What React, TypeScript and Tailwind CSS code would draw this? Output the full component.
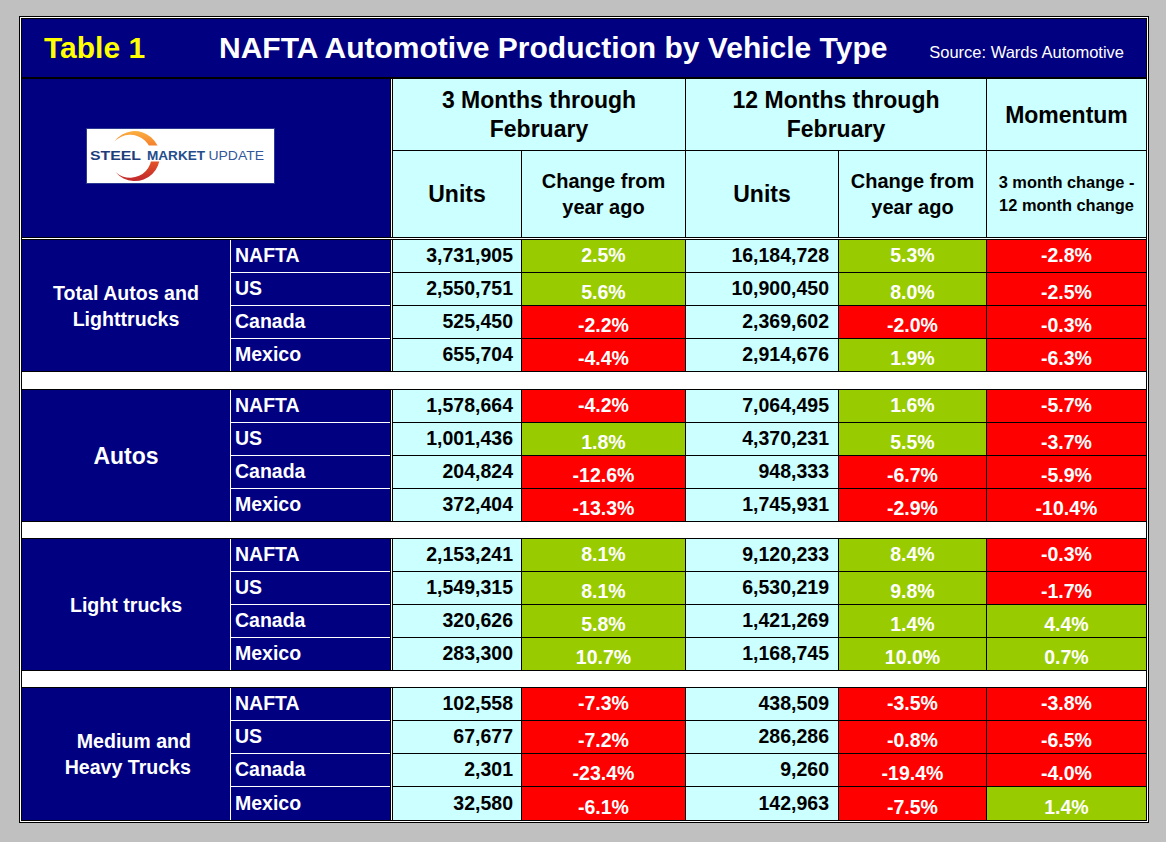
import React from "react";

type Row = [string, string, string, string, string, string];

type Group = {
  label: React.ReactNode;
  kind: "center" | "big" | "right";
  rows: Row[];
};

const groups: Group[] = [
  {
    label: (
      <>
        Total Autos and
        <br />
        Lighttrucks
      </>
    ),
    kind: "center",
    rows: [
      ["NAFTA", "3,731,905", "2.5%", "16,184,728", "5.3%", "-2.8%"],
      ["US", "2,550,751", "5.6%", "10,900,450", "8.0%", "-2.5%"],
      ["Canada", "525,450", "-2.2%", "2,369,602", "-2.0%", "-0.3%"],
      ["Mexico", "655,704", "-4.4%", "2,914,676", "1.9%", "-6.3%"],
    ],
  },
  {
    label: <>Autos</>,
    kind: "big",
    rows: [
      ["NAFTA", "1,578,664", "-4.2%", "7,064,495", "1.6%", "-5.7%"],
      ["US", "1,001,436", "1.8%", "4,370,231", "5.5%", "-3.7%"],
      ["Canada", "204,824", "-12.6%", "948,333", "-6.7%", "-5.9%"],
      ["Mexico", "372,404", "-13.3%", "1,745,931", "-2.9%", "-10.4%"],
    ],
  },
  {
    label: <>Light trucks</>,
    kind: "center",
    rows: [
      ["NAFTA", "2,153,241", "8.1%", "9,120,233", "8.4%", "-0.3%"],
      ["US", "1,549,315", "8.1%", "6,530,219", "9.8%", "-1.7%"],
      ["Canada", "320,626", "5.8%", "1,421,269", "1.4%", "4.4%"],
      ["Mexico", "283,300", "10.7%", "1,168,745", "10.0%", "0.7%"],
    ],
  },
  {
    label: (
      <>
        Medium and
        <br />
        Heavy Trucks
      </>
    ),
    kind: "right",
    rows: [
      ["NAFTA", "102,558", "-7.3%", "438,509", "-3.5%", "-3.8%"],
      ["US", "67,677", "-7.2%", "286,286", "-0.8%", "-6.5%"],
      ["Canada", "2,301", "-23.4%", "9,260", "-19.4%", "-4.0%"],
      ["Mexico", "32,580", "-6.1%", "142,963", "-7.5%", "1.4%"],
    ],
  },
];

function Logo() {
  return (
    <div className="w-[189px] h-[56px] border border-[#2b3a8f] bg-white">
      <svg width="187" height="54" viewBox="0 0 187 54">
        <defs>
          <linearGradient id="smuGrad" x1="0" y1="0" x2="0" y2="1">
            <stop offset="0" stopColor="#fbb040" />
            <stop offset="0.45" stopColor="#f26522" />
            <stop offset="1" stopColor="#c1272d" />
          </linearGradient>
        </defs>
        <path
          d="M27.5 12.5 A25 25 0 1 1 28.5 43 A21.5 21.5 0 1 0 27.5 12.5 Z"
          fill="url(#smuGrad)"
        />
        <rect x="0" y="16.5" width="187" height="16" fill="#ffffff" />
        <text
          x="3"
          y="30.5"
          fontFamily="'Liberation Sans', Arial, sans-serif"
          fontWeight="bold"
          fontSize="12.6"
          fill="#1c3d7a"
          textLength="51"
          lengthAdjust="spacingAndGlyphs"
        >
          STEEL
        </text>
        <text
          x="60"
          y="30.5"
          fontFamily="'Liberation Sans', Arial, sans-serif"
          fontWeight="bold"
          fontSize="12.4"
          fill="#234d8c"
          textLength="58"
          lengthAdjust="spacingAndGlyphs"
        >
          MARKET
        </text>
        <text
          x="121.5"
          y="30.5"
          fontFamily="'Liberation Sans', Arial, sans-serif"
          fontSize="12.4"
          fill="#33579a"
          textLength="55.5"
          lengthAdjust="spacingAndGlyphs"
        >
          UPDATE
        </text>
      </svg>
    </div>
  );
}

function Pct({ v, w, shift, last }: { v: string; w: string; shift: boolean; last: boolean }) {
  const neg = v.startsWith("-");
  return (
    <div
      className={
        "flex items-center justify-center border-r border-black text-white " +
        w +
        (neg ? " bg-[#ff0000]" : " bg-[#99cc00]") +
        (last ? "" : " border-b") +
        (shift ? " pt-[8px]" : "")
      }
    >
      {v}
    </div>
  );
}

function DataRow({ r, idx, lastInGroup, lastGroup }: { r: Row; idx: number; lastInGroup: boolean; lastGroup: boolean }) {
  const h = lastInGroup && !lastGroup ? "h-[32px]" : "h-[33px]";
  const shift = idx > 0;
  const bb = lastInGroup ? "" : " border-b";
  const momNeg = r[5].startsWith("-");
  return (
    <div className={"flex " + h}>
      <div className={"w-[159px] bg-[#000080] text-white flex items-center pl-[4px] border-white" + bb}>
        {r[0]}
      </div>
      <div className="w-[3px] border-x border-black bg-white" />
      <div className={"w-[129px] bg-[#ccffff] flex items-center justify-end pr-[8px] border-r border-black" + bb}>
        {r[1]}
      </div>
      <Pct v={r[2]} w="w-[164px]" shift={shift} last={lastInGroup} />
      <div className={"w-[153px] bg-[#ccffff] flex items-center justify-end pr-[9px] border-r border-black" + bb}>
        {r[3]}
      </div>
      <Pct v={r[4]} w="w-[148px]" shift={shift} last={lastInGroup} />
      <div
        className={
          "flex-1 flex items-center justify-center text-white border-black" +
          bb +
          (momNeg ? " bg-[#ff0000]" : " bg-[#99cc00]") +
          (shift ? " pt-[8px]" : "")
        }
      >
        {r[5]}
      </div>
    </div>
  );
}

export default function App() {
  return (
    <div className="w-[1166px] h-[842px] bg-[#c0c0c0] pt-[16px] pl-[19px] font-['Liberation_Sans',Arial,sans-serif]">
      <div className="w-[1130px] h-[807px] border border-black bg-white p-px">
        <div className="w-full h-full border border-black bg-white flex flex-col">
          {/* Title bar */}
          <div className="h-[60px] shrink-0 bg-[#000080] border-b-2 border-black flex items-baseline pt-[14px] pl-[22px] pr-[22px] leading-none">
            <span className="w-[175px] text-[30px] font-bold text-[#ffff00]">Table 1</span>
            <span className="text-[30px] font-bold text-white">NAFTA Automotive Production by Vehicle Type</span>
            <span className="ml-auto text-[16.5px] text-white">Source: Wards Automotive</span>
          </div>

          {/* Header */}
          <div className="h-[158px] shrink-0 flex">
            <div className="w-[368px] bg-[#000080] pl-[64px] pt-[49px]">
              <Logo />
            </div>
            <div className="w-[3px] border-x border-black bg-white" />
            <div className="flex-1 flex flex-col bg-[#ccffff] text-black font-bold">
              <div className="h-[72px] flex border-b border-black text-[23px] leading-[29px] text-center">
                <div className="w-[293px] border-r border-black flex items-center justify-center">
                  3 Months through
                  <br />
                  February
                </div>
                <div className="w-[301px] border-r border-black flex items-center justify-center">
                  12 Months through
                  <br />
                  February
                </div>
                <div className="flex-1 flex items-center justify-center pt-[2px]">Momentum</div>
              </div>
              <div className="h-[86px] flex text-center">
                <div className="w-[129px] border-r border-black flex items-center justify-center text-[23px]">
                  Units
                </div>
                <div className="w-[164px] border-r border-black flex items-center justify-center text-[20px] leading-[26px]">
                  Change from
                  <br />
                  year ago
                </div>
                <div className="w-[153px] border-r border-black flex items-center justify-center text-[23px]">
                  Units
                </div>
                <div className="w-[148px] border-r border-black flex items-center justify-center text-[20px] leading-[26px]">
                  Change from
                  <br />
                  year ago
                </div>
                <div className="flex-1 flex items-center justify-center text-[16.4px] leading-[23px]">
                  3 month change -
                  <br />
                  12 month change
                </div>
              </div>
            </div>
          </div>

          {/* double separator */}
          <div className="h-[3px] shrink-0 border-y border-black bg-white" />

          {/* Data groups */}
          {groups.map((g, gi) => {
            const lastGroup = gi === groups.length - 1;
            const labelCls =
              g.kind === "big"
                ? "justify-center text-center text-[23px]"
                : g.kind === "right"
                ? "justify-end text-right pr-[39px] text-[19.6px]"
                : "justify-center text-center text-[19.6px]";
            return (
              <React.Fragment key={gi}>
                <div className={"h-[132px] shrink-0 flex font-bold text-[19.5px]" + (lastGroup ? "" : " border-b border-black")}>
                  <div
                    className={
                      "w-[209px] bg-[#000080] border-r border-white text-white flex items-center leading-[26px] " +
                      labelCls
                    }
                  >
                    <div>{g.label}</div>
                  </div>
                  <div className="flex-1 flex flex-col">
                    {g.rows.map((r, ri) => (
                      <DataRow
                        key={ri}
                        r={r}
                        idx={ri}
                        lastInGroup={ri === g.rows.length - 1}
                        lastGroup={lastGroup}
                      />
                    ))}
                  </div>
                </div>
                {!lastGroup && (
                  <div className={(gi === 0 ? "h-[18px]" : "h-[17px]") + " shrink-0 bg-white border-b border-black"} />
                )}
              </React.Fragment>
            );
          })}
        </div>
      </div>
    </div>
  );
}
